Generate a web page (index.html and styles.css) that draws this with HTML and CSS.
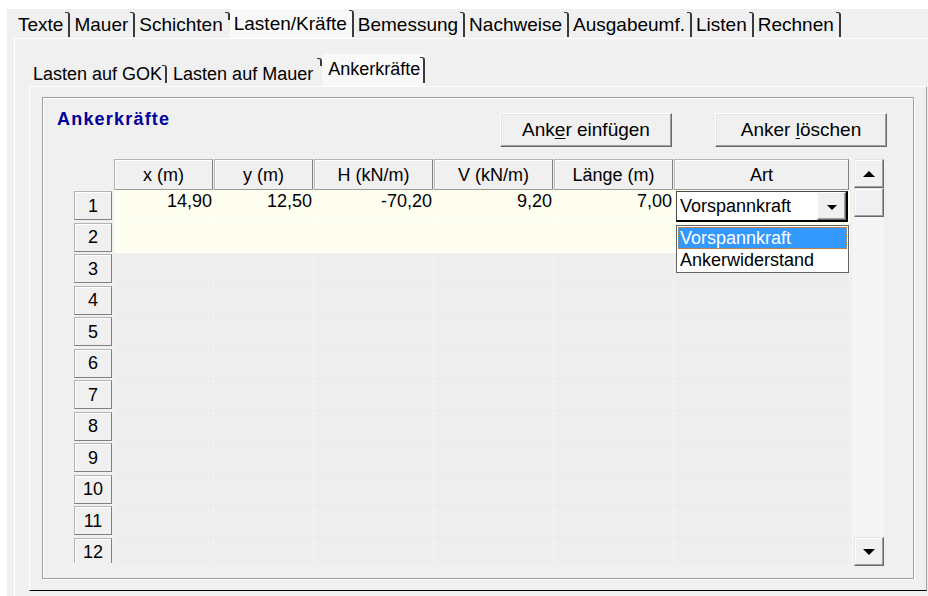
FILE: index.html
```html
<!DOCTYPE html>
<html lang="de">
<head>
<meta charset="utf-8">
<title>Ankerkräfte</title>
<link rel="stylesheet" href="styles.css">
</head>
<body>
<div class="app">
  <nav class="tabs tabs-main">
    <span class="tab">Texte</span>
    <span class="tab">Mauer</span>
    <span class="tab tab-before-active">Schichten</span>
    <span class="tab tab-active">Lasten/Kräfte</span>
    <span class="tab">Bemessung</span>
    <span class="tab">Nachweise</span>
    <span class="tab">Ausgabeumf.</span>
    <span class="tab">Listen</span>
    <span class="tab">Rechnen</span>
  </nav>
  <section class="page page-main">
    <nav class="tabs tabs-sub">
      <span class="tab">Lasten auf GOK</span>
      <span class="tab tab-before-active">Lasten auf Mauer</span>
      <span class="tab tab-active">Ankerkräfte</span>
    </nav>
    <div class="page page-sub">
      <div class="group">
        <div class="group-head">
          <h2 class="group-title">Ankerkräfte</h2>
          <div class="actions">
            <button class="btn" type="button">Ank<u>e</u>r einfügen</button>
            <button class="btn" type="button">Anker <u>l</u>öschen</button>
          </div>
        </div>
        <div class="table-area">
          <div class="sheet">
            <div class="corner"></div>
            <div class="colhead">x (m)</div>
            <div class="colhead">y (m)</div>
            <div class="colhead">H (kN/m)</div>
            <div class="colhead">V (kN/m)</div>
            <div class="colhead">Länge (m)</div>
            <div class="colhead">Art</div>

            <div class="rh">1</div>
            <div class="cell filled">14,90</div>
            <div class="cell filled">12,50</div>
            <div class="cell filled">-70,20</div>
            <div class="cell filled">9,20</div>
            <div class="cell filled">7,00</div>
            <div class="cell filled art">
              <div class="combo">
                <span class="combo-value">Vorspannkraft</span>
                <span class="combo-btn"><svg width="10" height="5" viewBox="0 0 10 5"><path d="M0 0h10L5 5z"/></svg></span>
              </div>
            </div>

            <div class="rh">2</div>
            <div class="cell filled"></div>
            <div class="cell filled"></div>
            <div class="cell filled"></div>
            <div class="cell filled"></div>
            <div class="cell filled"></div>
            <div class="cell filled"></div>

            <div class="rh">3</div>
            <div class="cell"></div><div class="cell"></div><div class="cell"></div><div class="cell"></div><div class="cell"></div><div class="cell"></div>
            <div class="rh">4</div>
            <div class="cell"></div><div class="cell"></div><div class="cell"></div><div class="cell"></div><div class="cell"></div><div class="cell"></div>
            <div class="rh">5</div>
            <div class="cell"></div><div class="cell"></div><div class="cell"></div><div class="cell"></div><div class="cell"></div><div class="cell"></div>
            <div class="rh">6</div>
            <div class="cell"></div><div class="cell"></div><div class="cell"></div><div class="cell"></div><div class="cell"></div><div class="cell"></div>
            <div class="rh">7</div>
            <div class="cell"></div><div class="cell"></div><div class="cell"></div><div class="cell"></div><div class="cell"></div><div class="cell"></div>
            <div class="rh">8</div>
            <div class="cell"></div><div class="cell"></div><div class="cell"></div><div class="cell"></div><div class="cell"></div><div class="cell"></div>
            <div class="rh">9</div>
            <div class="cell"></div><div class="cell"></div><div class="cell"></div><div class="cell"></div><div class="cell"></div><div class="cell"></div>
            <div class="rh">10</div>
            <div class="cell"></div><div class="cell"></div><div class="cell"></div><div class="cell"></div><div class="cell"></div><div class="cell"></div>
            <div class="rh">11</div>
            <div class="cell"></div><div class="cell"></div><div class="cell"></div><div class="cell"></div><div class="cell"></div><div class="cell"></div>
            <div class="rh">12</div>
            <div class="cell"></div><div class="cell"></div><div class="cell"></div><div class="cell"></div><div class="cell"></div><div class="cell"></div>
          </div>

          <div class="vscroll">
            <span class="sb-btn"><svg width="12" height="6" viewBox="0 0 12 6"><path d="M0 6h12L6 0z"/></svg></span>
            <span class="sb-thumb"></span>
            <span class="sb-track"></span>
            <span class="sb-btn"><svg width="12" height="6" viewBox="0 0 12 6"><path d="M0 0h12L6 6z"/></svg></span>
          </div>

          <ul class="droplist">
            <li class="selected">Vorspannkraft</li>
            <li>Ankerwiderstand</li>
          </ul>
        </div>
      </div>
    </div>
  </section>
</div>
</body>
</html>
```

FILE: styles.css
```css
* {
  box-sizing: border-box;
}

html,
body {
  margin: 0;
  background: #ffffff;
}

body {
  padding: 9px 0 0 7px;
  font-family: "Liberation Sans", Arial, sans-serif;
  font-size: 18px;
  color: #000000;
}

.app {
  width: 921px;
  height: 587px;
  background: #f0f0f0;
  overflow: hidden;
}

/* ---------- tab strips ---------- */

.tabs {
  display: flex;
  align-items: flex-end;
}

.tab {
  position: relative;
  line-height: 22px;
  white-space: nowrap;
}

.tab::after {
  content: "";
  position: absolute;
  right: 0;
  top: 0;
  bottom: 1px;
  width: 3px;
  border-right: 2px solid #3a3a3a;
  border-top: 1px solid #3a3a3a;
  border-top-right-radius: 3px;
}

.tab-active {
  background: #f9f9f9;
}

.tab-before-active::after {
  bottom: auto;
  height: 7px;
}

.tabs-main {
  height: 29px;
  padding-left: 7px;
  font-size: 19px;
}

.tabs-main .tab {
  height: 26px;
  padding: 2px 7px 0 4px;
}

.tabs-main .tab-active {
  height: 29px;
  padding-top: 4px;
}

.tabs-main .tab-active::after {
  top: 1px;
}

.tabs-sub {
  height: 47px;
  margin-left: -2px;
  font-size: 18px;
}

.tabs-sub .tab {
  height: 28px;
  padding: 5px 5px 0 6px;
}

.tabs-sub .tab::after {
  top: 7px;
  bottom: 3px;
}

.tabs-sub .tab-before-active {
  padding-right: 9px;
}

.tabs-sub .tab-active {
  height: 32px;
  padding-top: 4px;
}

.tabs-sub .tab-active::after {
  top: 3px;
}

.tabs-sub .tab-before-active::after {
  top: 0;
  bottom: auto;
  height: 7px;
}

/* ---------- tab pages ---------- */

.page-main {
  margin-left: 7px;
  height: 558px;
  border-top: 1px solid #ffffff;
  border-left: 1px solid #ffffff;
  padding-left: 14px;
}

.page-sub {
  width: 898px;
  height: 505px;
  border-top: 1px solid #ffffff;
  border-left: 1px solid #ffffff;
  border-right: 1px solid #a0a0a0;
  border-bottom: 1px solid #000000;
  padding: 10px 0 0 12px;
}

/* ---------- group box ---------- */

.group {
  width: 872px;
  height: 482px;
  border: 1px solid #a0a0a0;
  box-shadow: inset 1px 1px 0 #ffffff, 1px 1px 0 #ffffff;
  padding: 10px 26px 0 14px;
}

.group-head {
  display: flex;
  align-items: flex-start;
  height: 39px;
}

.group-title {
  margin: 0;
  font-size: 18px;
  line-height: 22px;
  font-weight: bold;
  letter-spacing: 1.2px;
  color: #00009c;
}

.actions {
  margin-left: auto;
  display: flex;
  gap: 43px;
  padding-top: 5px;
}

.btn {
  width: 172px;
  height: 34px;
  padding: 0;
  font-family: inherit;
  font-size: 19px;
  line-height: 22px;
  color: #000000;
  background: #f0f0f0;
  border: 1px solid;
  border-color: #ffffff #696969 #696969 #ffffff;
  box-shadow: inset -1px -1px 0 #a0a0a0, inset 1px 1px 0 #e3e3e3;
}

.btn u {
  text-underline-offset: 2px;
}

/* ---------- table ---------- */

.table-area {
  position: relative;
  display: flex;
  align-items: flex-start;
  gap: 2px;
  margin-top: 12px;
  margin-left: 17px;
}

.sheet {
  display: grid;
  grid-template-columns: 40px 100px 100px 120px 120px 120px 176px;
  grid-template-rows: 31px;
  grid-auto-rows: 31.5px;
  width: 776px;
  height: 404px;
  overflow: hidden;
}

.colhead {
  padding-top: 4px;
  text-align: center;
  line-height: 22px;
  background: #f0f0f0;
  border: 1px solid;
  border-color: #b4b4b4 #808080 #9a9a9a #b4b4b4;
  box-shadow: inset 1px 1px 0 #ffffff;
  margin-right: 1px;
}

.rh {
  width: 38px;
  margin: 1px 0 1.5px;
  display: flex;
  align-items: center;
  justify-content: center;
  line-height: 22px;
  background: #f0f0f0;
  border: 1px solid;
  border-color: #b4b4b4 #808080 #808080 #b4b4b4;
  box-shadow: inset 1px 1px 0 #ffffff;
}

.cell {
  background: #eeeeee;
  border-right: 1px solid #f3f3f3;
  border-bottom: 1px dotted #e6e6e6;
  line-height: 22px;
  text-align: right;
  padding-right: 1px;
}

.cell.filled {
  background: #fefef0;
  border-right-color: #ffffff;
  border-bottom: 1px solid #ffffff;
}

.cell.art {
  padding: 0;
}

.combo {
  position: relative;
  z-index: 1;
  display: flex;
  height: 31px;
  margin: 1px 1px 0 2px;
  background: #ffffff;
  border: 1px solid #4a4a4a;
  border-right: 2px solid #000000;
  border-bottom: 2px solid #000000;
  text-align: left;
}

.combo-value {
  flex: 1;
  padding: 3px 0 0 3px;
  line-height: 22px;
}

.combo-btn {
  width: 29px;
  display: flex;
  align-items: center;
  justify-content: center;
  padding-top: 3px;
  background: #f0f0f0;
  border: 1px solid;
  border-color: #ffffff #696969 #696969 #ffffff;
  box-shadow: inset -1px -1px 0 #a0a0a0;
}

/* ---------- vertical scrollbar ---------- */

.vscroll {
  width: 32px;
  height: 407px;
  display: flex;
  flex-direction: column;
  background-color: #ffffff;
  background-image: conic-gradient(#fbfbfb 25%, #efefef 0 50%, #fbfbfb 0 75%, #efefef 0);
  background-size: 2px 2px;
}

.sb-btn,
.sb-thumb {
  width: 30px;
  height: 29px;
  margin-left: 2px;
  display: flex;
  align-items: center;
  justify-content: center;
  background: #f0f0f0;
  border: 1px solid;
  border-color: #e3e3e3 #696969 #696969 #e3e3e3;
  box-shadow: inset -1px -1px 0 #a0a0a0, inset 1px 1px 0 #ffffff;
}

.sb-track {
  flex: 1;
}

/* ---------- open combo list ---------- */

.droplist {
  position: absolute;
  left: 602px;
  top: 66px;
  z-index: 2;
  width: 173px;
  height: 48px;
  margin: 0;
  padding: 1px 0 0;
  list-style: none;
  background: #ffffff;
  border: 1px solid #646464;
}

.droplist li {
  height: 22px;
  padding: 1px 0 0 3px;
  line-height: 21px;
}

.droplist li.selected {
  margin: 0 1px;
  padding-left: 2px;
  background: #3399ff;
  color: #ffffff;
  outline: 1px dotted #c8844a;
  outline-offset: -1px;
}
```
